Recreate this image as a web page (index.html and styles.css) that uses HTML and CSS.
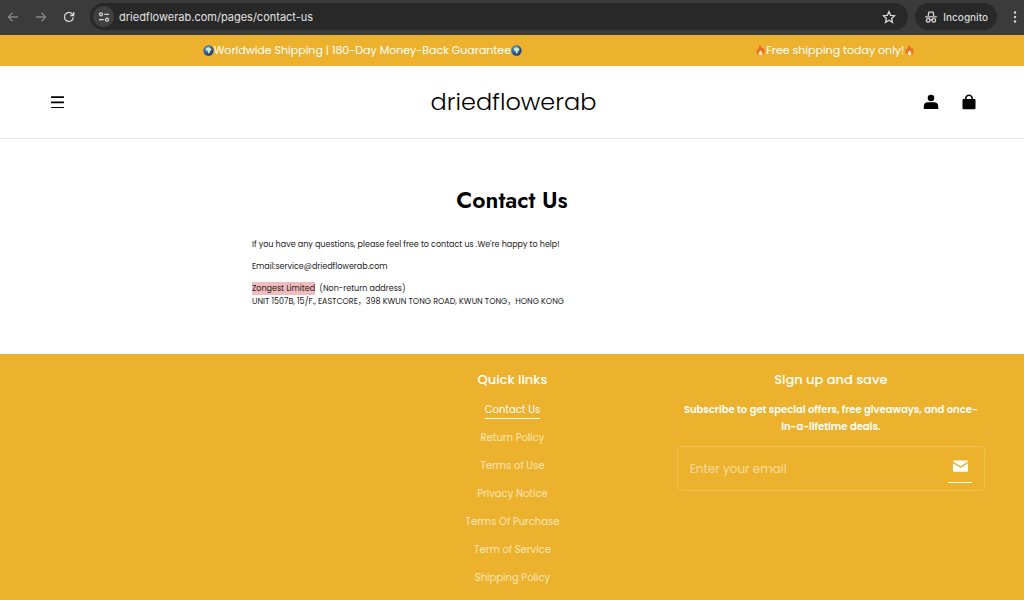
FILE: index.html
```html
<!DOCTYPE html>
<html lang="en">
<head>
<meta charset="utf-8">
<meta name="viewport" content="width=device-width, initial-scale=1">
<title>Contact Us</title>
<link rel="stylesheet" href="styles.css">
</head>
<body>
<svg class="defs" aria-hidden="true">
  <defs>
    <radialGradient id="sea" cx="0.4" cy="0.35" r="0.7"><stop offset="0" stop-color="#6fb4dc"/><stop offset="0.55" stop-color="#2d62a0"/><stop offset="1" stop-color="#1c2f5c"/></radialGradient>
    <linearGradient id="fire" x1="0" y1="0" x2="0" y2="1"><stop offset="0" stop-color="#e4512b"/><stop offset="1" stop-color="#f58a2c"/></linearGradient>
    <symbol id="globe" viewBox="0 0 12 12"><circle cx="6" cy="6" r="5.6" fill="url(#sea)"/><path d="M3.2 3.6 5 2.6l2.6.2 1.6 2-.6 1.2-1 .6-.5 2.2-1 .8-.7-1.4V6.4L3.6 6Z" fill="#cfe8c4"/><path d="M5 1.2 7 1l-.8.9Z" fill="#9cc98c"/></symbol>
    <symbol id="flame" viewBox="0 0 12 12"><path d="M5.4.4C6.6 2 6.6 3.4 7.8 4.4c.4-.6.6-1.2.5-2C9.900 4 10.800 5.900 10.500 8 10.200 10.300 8.300 11.700 6 11.700S1.800 10.200 1.500 8C1.300 6.200 2.100 4.900 2.900 3.700c.1.800.4 1.300.8 1.600C3.900 3.300 4.600 1.800 5.400.4Z" fill="url(#fire)"/><path d="M6 5.600c1.100 1.500 2.200 2.300 2 3.900-.1 1.200-1 1.900-2 1.900s-2-.7-2-1.900C3.900 8 5.200 7.200 6 5.600Z" fill="#fff0a8"/></symbol>
  </defs>
</svg>

<div class="browser">
  <button class="tool dim" aria-label="Back"><svg viewBox="0 0 12 12"><path d="M11 6H1.500M5.500 1.800 1.400 6l4.100 4.200"/></svg></button>
  <button class="tool dim" aria-label="Forward"><svg viewBox="0 0 12 12"><path d="M1 6h9.500M6.500 1.800 10.600 6l-4.100 4.200"/></svg></button>
  <button class="tool" aria-label="Reload"><svg viewBox="0 0 12 12"><path d="M10.400 6.400A4.500 4.500 0 1 1 9.300 3L10.500 4.300M10.700 1v3.500H7.200"/></svg></button>
  <div class="address">
    <button class="site" aria-label="Site information"><svg viewBox="0 0 12 12"><circle cx="3" cy="3.300" r="1.500"/><path d="M6.300 3.300h4.700M1 8.700h4.700"/><circle cx="9" cy="8.700" r="1.500"/></svg></button>
    <input class="url" type="text" aria-label="Address" value="driedflowerab.com/pages/contact-us">
    <button class="star" aria-label="Bookmark"><svg viewBox="0 0 14 14"><path d="m7 1.600 1.600 3.700 4 .4-3 2.700.9 4L7 10.300l-3.500 2.100.9-4-3-2.700 4-.4Z"/></svg></button>
  </div>
  <button class="incognito"><svg viewBox="0 0 14 14" aria-hidden="true"><path d="M4.200 6 4.900 2.200h4.200L9.800 6"/><path d="M1.200 6.900h11.600M6 10.100q1-.7 2 0"/><circle cx="4.200" cy="10.400" r="1.800"/><circle cx="9.800" cy="10.400" r="1.800"/></svg>Incognito</button>
  <button class="more" aria-label="Menu"><svg viewBox="0 0 4 14"><circle cx="2" cy="2.500" r="1.200"/><circle cx="2" cy="7" r="1.200"/><circle cx="2" cy="11.500" r="1.200"/></svg></button>
</div>

<div class="announcement">
  <p><svg class="emoji"><use href="#globe"/></svg>Worldwide Shipping | 180-Day Money-Back Guarantee<svg class="emoji"><use href="#globe"/></svg></p>
  <p><svg class="emoji"><use href="#flame"/></svg>Free shipping today only!<svg class="emoji"><use href="#flame"/></svg></p>
</div>

<header class="header">
  <button class="burger" aria-label="Open menu"><svg viewBox="0 0 14 12"><path d="M1 1h12M1 6h12M1 11h12"/></svg></button>
  <a class="logo" href="#">driedflowerab</a>
  <nav class="actions" aria-label="Account and cart">
    <a href="#" aria-label="Account"><svg viewBox="0 0 16 16"><circle cx="8" cy="4" r="3.300"/><path d="M.8 15V12.500Q.8 8.300 5 8.300h6q4.200 0 4.200 4.200V15Z"/></svg></a>
    <a href="#" aria-label="Cart"><svg viewBox="0 0 16 16"><rect x="1.500" y="5" width="13" height="10.300" rx="1"/><path class="handle" d="M4.800 6V4.700a3.200 3.400 0 0 1 6.400 0V6"/></svg></a>
  </nav>
</header>

<main class="page">
  <h1>Contact Us</h1>
  <div class="content">
    <p>If you have any questions, please feel free to contact us .We're happy to help!</p>
    <p>Email:service@driedflowerab.com</p>
    <p><mark>Zongest Limited</mark>&nbsp; (Non-return address)<br>UNIT 1507B, 15/F., EASTCORE，398 KWUN TONG ROAD, KWUN TONG，HONG KONG</p>
  </div>
</main>

<footer class="footer">
  <nav class="links" aria-labelledby="quick">
    <h2 id="quick">Quick links</h2>
    <ul>
      <li><a class="current" href="#">Contact Us</a></li>
      <li><a href="#">Return Policy</a></li>
      <li><a href="#">Terms of Use</a></li>
      <li><a href="#">Privacy Notice</a></li>
      <li><a href="#">Terms Of Purchase</a></li>
      <li><a href="#">Term of Service</a></li>
      <li><a href="#">Shipping Policy</a></li>
    </ul>
  </nav>
  <section class="signup">
    <h2>Sign up and save</h2>
    <p>Subscribe to get special offers, free giveaways, and once-in-a-lifetime deals.</p>
    <form>
      <input type="email" placeholder="Enter your email" aria-label="Enter your email">
      <button type="button" aria-label="Subscribe"><svg viewBox="0 0 16 12"><path d="M1 0h14Q16 0 16 1.300L8 6.300 0 1.300Q0 0 1 0ZM0 3l8 5 8-5v8q0 1-1 1H1Q0 12 0 11Z"/></svg></button>
    </form>
  </section>
</footer>
</body>
</html>
```
FILE: styles.css
```css
* { box-sizing: border-box; }
body { margin: 0; min-height: 100vh; display: flex; flex-direction: column; background: #fff; color: #000; font-family: Poppins, Inter, "Noto Sans CJK SC", sans-serif; }
h1, h2, p, ul { margin: 0; padding: 0; }
button { padding: 0; border: 0; background: none; color: inherit; font: inherit; }
a { color: inherit; text-decoration: none; }
svg { display: block; }
.defs { position: absolute; width: 0; height: 0; }

.browser { display: flex; align-items: center; height: 35px; padding: 0 7px 2px 7px; background: #3b3b3b; color: #d6d6d6; font: 500 10px Inter, sans-serif; }
.browser svg { fill: none; stroke: currentColor; stroke-width: 1.3; }
.tool { width: 12px; margin-right: 16px; }
.tool.dim { color: #858585; }
.address { flex: 1; display: flex; align-items: center; height: 27px; margin-left: -1px; padding: 0 12px 0 3px; border-radius: 14px; background: #282828; }
.site { display: grid; place-items: center; width: 21px; height: 21px; border-radius: 50%; background: #404040; }
.site svg { width: 12px; }
.url { flex: 1; min-width: 0; padding: 0 5px; border: 0; background: none; color: #e2e2e2; font: 400 11px Inter, sans-serif; outline: 0; }
.star svg, .incognito svg { width: 14px; }
.incognito { display: flex; align-items: center; gap: 5px; height: 27px; margin-left: 7px; padding: 0 9px; border-radius: 14px; background: #282828; }
.more { width: 4px; margin-left: 16px; }
.browser .more svg { fill: currentColor; stroke: none; }

.announcement { display: grid; grid-template-columns: 2fr 1fr; padding: 0 31px 0 47px; background: #ecb22e; color: #fff; font-size: 11px; line-height: 31px; }
.announcement p { display: flex; align-items: center; justify-content: center; }
.emoji { width: 11px; height: 11px; }

.header { display: grid; grid-template-columns: 1fr auto 1fr; align-items: center; height: 73px; padding: 0 47px 0 50px; border-bottom: 1px solid #e4e4e4; }
.burger svg { width: 15px; fill: none; stroke: #000; stroke-width: 1.6; }
.logo { font-size: 24px; font-weight: 300; line-height: 36px; }
.actions { display: flex; justify-content: flex-end; gap: 22px; }
.actions svg { width: 16px; }
.handle { fill: none; stroke: #000; stroke-width: 1.6; }

.page { padding: 44px 24px 46px; }
.page h1 { font-family: Jost, Lato, sans-serif; font-size: 23px; font-weight: 600; line-height: 34px; text-align: center; }
.content { max-width: 520px; margin: 21px auto 0; color: #222; font-size: 8px; line-height: 13px; }
.content p + p { margin-top: 9px; }
.content mark { padding: 1px 0; background: #f2bcbe; color: inherit; }

.footer { flex: 1; display: grid; grid-template-columns: repeat(3, 1fr); gap: 10px; padding: 16px 39px 7px 40px; background: #ecb22e; color: #fff; text-align: center; }
.footer h2 { font-size: 13px; font-weight: 500; line-height: 20px; }
.links { grid-column: 2; }
.links ul { list-style: none; margin-top: 6px; font-size: 10px; line-height: 17px; }
.links li { height: 28px; padding-top: 5px; }
.links a { display: inline-block; color: #fae6b8; }
.links .current { border-bottom: 1px solid #fff; color: #fff; }
.signup p { margin-top: 11px; font-size: 10px; font-weight: 600; line-height: 17px; }
.signup form { display: flex; align-items: center; height: 45px; margin-top: 11px; padding: 0 12px; border: 1px solid #f0bf52; border-radius: 4px; }
.signup input { flex: 1; min-width: 0; padding: 0; border: 0; outline: 0; background: none; color: #fff; font: inherit; font-size: 12px; }
.signup input::placeholder { color: #f8dc9c; opacity: 1; }
.signup button { display: flex; justify-content: center; width: 24px; height: 28px; padding-top: 5px; border-bottom: 1px solid #fff; }
.signup button svg { width: 15px; height: 12px; fill: #fff; }
```
